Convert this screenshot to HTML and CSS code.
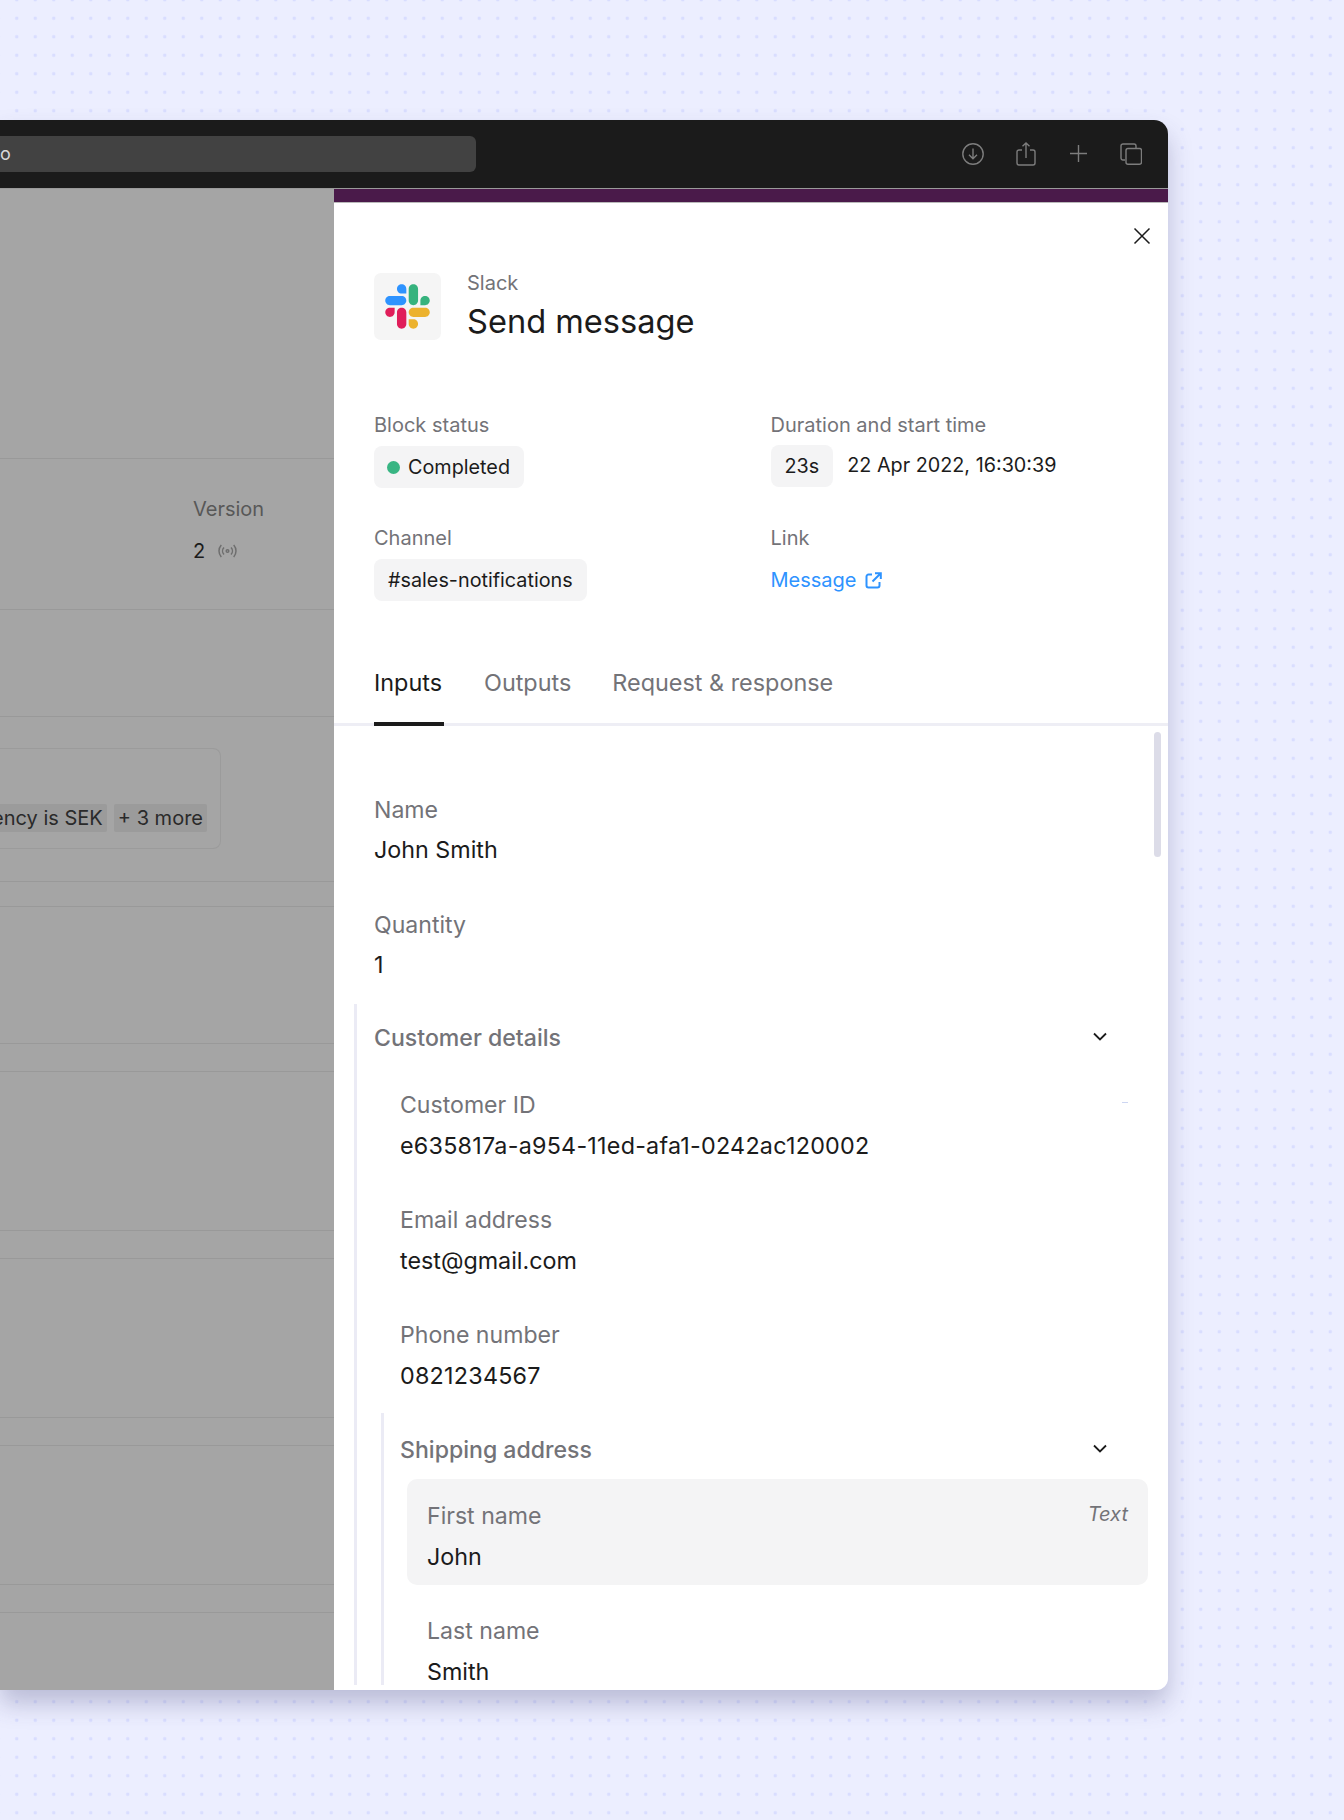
FILE: index.html
```html
<!DOCTYPE html>
<html lang="en">
  <head>
    <meta charset="UTF-8" />
    <meta name="viewport" content="width=device-width, initial-scale=1.0" />
    <title>Send message</title>
    <link rel="stylesheet" href="styles.css">
  </head>
  <body>
    <div class="window">
      <div class="titlebar">
        <div class="address"><span>o</span></div>
        <div class="toolbar">
          <svg class="tool" width="22" height="22" viewBox="0 0 22 22"><circle cx="11" cy="11" r="10.2"/><path d="M11 5.5v10M7 11.8l4 4 4-4"/></svg>
          <svg class="tool" width="20" height="24" viewBox="0 0 20 24"><path d="M6 8H3a2 2 0 0 0-2 2v11a2 2 0 0 0 2 2h14a2 2 0 0 0 2-2V10a2 2 0 0 0-2-2h-3M10 16V1M6.5 4.2L10 1l3.500 3.200"/></svg>
          <svg class="tool" width="19" height="19" viewBox="0 0 19 19"><path d="M9.500 1v17M1 9.500h17"/></svg>
          <svg class="tool" width="22" height="22" viewBox="0 0 22 22"><path d="M5 17H3a2 2 0 0 1-2-2V3a2 2 0 0 1 2-2h11a2 2 0 0 1 2 2v2"/><rect x="6" y="5.500" width="15.500" height="15.700" rx="2"/></svg>
        </div>
      </div>

      <div class="content">
        <div class="dim-col">
          <div class="dim-row"></div>
          <div class="dim-row version-row">
            <div class="dim-label">Version</div>
            <div class="version-value">
              <span>2</span>
              <svg width="21" height="14" viewBox="0 0 21 14"><circle cx="10.500" cy="7" r="1.300"/><path d="M7 3.500a5 5 0 0 0 0 7M14 3.500a5 5 0 0 1 0 7M4.300 1a9 9 0 0 0 0 12M16.700 1a9 9 0 0 1 0 12"/></svg>
            </div>
          </div>
          <div class="dim-row"></div>
          <div class="dim-row">
            <div class="filter-box">
              <span class="dim-chip">Currency is SEK</span>
              <span class="dim-chip">+ 3 more</span>
            </div>
          </div>
          <div class="dim-row"></div>
          <div class="dim-row"></div>
          <div class="dim-row"></div>
          <div class="dim-row"></div>
          <div class="dim-row"></div>
          <div class="dim-row"></div>
          <div class="dim-row"></div>
          <div class="dim-row"></div>
          <div class="dim-row"></div>
          <div class="dim-row"></div>
        </div>

        <div class="panel">
          <div class="panel-stripe"></div>
          <svg class="close-btn" width="18" height="18" viewBox="0 0 18 18"><path d="M1.500 1.500l15 15M16.500 1.500l-15 15"/></svg>

          <div class="panel-header">
            <div class="logo-tile">
              <svg width="45" height="45" viewBox="0 0 127 127">
                <path fill="#e01e5a" d="M27.200 80c0 7.300-5.900 13.200-13.200 13.200C6.700 93.200.8 87.300.8 80c0-7.300 5.900-13.200 13.200-13.200h13.200V80zm6.600 0c0-7.300 5.900-13.200 13.200-13.200 7.300 0 13.200 5.900 13.200 13.200v33c0 7.300-5.900 13.200-13.200 13.200-7.300 0-13.200-5.900-13.200-13.200V80z"/>
                <path fill="#2e93ff" d="M47 27c-7.300 0-13.200-5.900-13.200-13.200C33.800 6.500 39.700.6 47 .6c7.300 0 13.200 5.900 13.200 13.200V27H47zm0 6.700c7.300 0 13.200 5.900 13.200 13.200 0 7.300-5.900 13.200-13.200 13.200H13.900C6.600 60.100.7 54.200.7 46.900c0-7.300 5.900-13.200 13.200-13.200H47z"/>
                <path fill="#36b37e" d="M99.900 46.900c0-7.300 5.900-13.200 13.200-13.200 7.300 0 13.200 5.900 13.200 13.200 0 7.300-5.900 13.200-13.200 13.200H99.900V46.900zm-6.600 0c0 7.300-5.900 13.200-13.200 13.200-7.300 0-13.200-5.900-13.200-13.200V13.800C66.900 6.500 72.800.6 80.100.6c7.300 0 13.200 5.900 13.200 13.200v33.100z"/>
                <path fill="#ecb22e" d="M80.100 99.800c7.300 0 13.200 5.900 13.200 13.200 0 7.300-5.900 13.200-13.200 13.200-7.300 0-13.200-5.900-13.200-13.200V99.800h13.200zm0-6.600c-7.300 0-13.200-5.900-13.200-13.200 0-7.300 5.900-13.200 13.200-13.200h33.100c7.300 0 13.200 5.900 13.200 13.200 0 7.300-5.900 13.200-13.200 13.200H80.100z"/>
              </svg>
            </div>
            <div class="header-text">
              <div class="app-name">Slack</div>
              <h1>Send message</h1>
            </div>
          </div>

          <div class="meta-grid">
            <div>
              <div class="label">Block status</div>
              <div class="pill"><span class="status-dot"></span>Completed</div>
            </div>
            <div>
              <div class="label">Duration and start time</div>
              <div class="duration">
                <div class="pill">23s</div>
                <span>22 Apr 2022, 16:30:39</span>
              </div>
            </div>
            <div>
              <div class="label">Channel</div>
              <div class="pill">#sales-notifications</div>
            </div>
            <div>
              <div class="label">Link</div>
              <a class="link" href="#">
                Message
                <svg width="17" height="17" viewBox="0 0 17 17"><path d="M7 2.500H3.500a2 2 0 0 0-2 2v9a2 2 0 0 0 2 2h9a2 2 0 0 0 2-2V10M10 1.200h5.800V7M15.500 1.500L7.500 9.500"/></svg>
              </a>
            </div>
          </div>

          <div class="tabs">
            <div class="tab active">Inputs</div>
            <div class="tab">Outputs</div>
            <div class="tab">Request &amp; response</div>
          </div>

          <div class="fields">
            <div class="scrollbar"></div>

            <div class="field">
              <div class="label">Name</div>
              <div class="value">John Smith</div>
            </div>
            <div class="field">
              <div class="label">Quantity</div>
              <div class="value">1</div>
            </div>

            <div class="group">
              <div class="group-head">
                <span>Customer details</span>
                <svg class="chevron" width="16" height="10" viewBox="0 0 16 10"><path d="M2 1.500l6 6 6-6"/></svg>
              </div>
              <div class="group-body">
                <div class="field">
                  <div class="field-top">
                    <div class="label">Customer ID</div>
                    <span class="speck"></span>
                  </div>
                  <div class="value digits">e635817a-a954-11ed-afa1-0242ac120002</div>
                </div>
                <div class="field">
                  <div class="label">Email address</div>
                  <div class="value">test@gmail.com</div>
                </div>
                <div class="field">
                  <div class="label">Phone number</div>
                  <div class="value digits">0821234567</div>
                </div>

                <div class="group nested">
                  <div class="group-head">
                    <span>Shipping address</span>
                    <svg class="chevron" width="16" height="10" viewBox="0 0 16 10"><path d="M2 1.500l6 6 6-6"/></svg>
                  </div>
                  <div class="field card">
                    <div class="field-top">
                      <div class="label">First name</div>
                      <span class="type-hint">Text</span>
                    </div>
                    <div class="value">John</div>
                  </div>
                  <div class="field last-name">
                    <div class="label">Last name</div>
                    <div class="value">Smith</div>
                  </div>
                </div>
              </div>
            </div>
          </div>
        </div>
      </div>
    </div>
  </body>
</html>
```

FILE: styles.css
```css
* {
  box-sizing: border-box;
}

body {
  font-family: Inter, "Liberation Sans", sans-serif;
  margin: 0;
  height: 1820px;
  overflow: hidden;
  padding-top: 120px;
  background-color: #eceeff;
  background-image: radial-gradient(circle, #d9ddff 1.7px, transparent 2px);
  background-size: 18.5px 18.5px;
  background-position: 7.5px 9px;
}

.window {
  width: 1168px;
  height: 1570px;
  display: flex;
  flex-direction: column;
  overflow: hidden;
  border-radius: 0 14px 12px 0;
  box-shadow: 0 14px 24px rgba(60, 60, 110, 0.28);
}

.titlebar {
  height: 69px;
  flex: none;
  display: flex;
  align-items: center;
  justify-content: space-between;
  padding: 0 26px 1px 0;
  background-color: #1b1b1b;
  border-bottom: 1px solid #9a9a9a;
}

.address {
  width: 476px;
  height: 36px;
  display: flex;
  align-items: center;
  background-color: #424242;
  border-radius: 0 6px 6px 0;
  color: #d8d8d8;
  font-size: 18px;
}

.toolbar {
  display: flex;
  align-items: center;
  gap: 32px;
}

.tool {
  fill: none;
  stroke: #7d7d7d;
  stroke-width: 1.4;
}

.tool:nth-child(2) {
  margin-right: 1px;
}

.content {
  flex: 1;
  min-height: 0;
  display: flex;
}

/* dimmed page behind the drawer */
.dim-col {
  width: 334px;
  flex: none;
  display: grid;
  grid-template-rows: 270px 151px 107px 165px 25px 137px 28px 159px 28px 159px 28px 139px 28px 1fr;
  background-color: #a5a5a5;
  overflow: hidden;
}

.dim-row {
  border-bottom: 1px solid #999;
}

.dim-row:last-child {
  border-bottom: none;
}

.version-row {
  padding: 37px 0 0 193px;
}

.dim-label {
  font-size: 20px;
  line-height: 26px;
  color: #585858;
}

.version-value {
  display: flex;
  align-items: center;
  gap: 12px;
  margin-top: 16px;
  font-size: 20px;
  line-height: 26px;
  color: #1c1c1c;
}

.version-value svg {
  fill: none;
  stroke: #6e6e6e;
  stroke-width: 1.5;
}

.filter-box {
  width: 221px;
  height: 101px;
  margin-top: 31px;
  padding: 55px 13px 0 0;
  display: flex;
  justify-content: flex-end;
  gap: 7px;
  border: 1px solid #9b9b9b;
  border-left: none;
  border-radius: 0 8px 8px 0;
  white-space: nowrap;
}

.dim-chip {
  flex: none;
  height: 28px;
  padding: 0 4px;
  background-color: #9b9b9b;
  border-radius: 2px;
  font-size: 20px;
  line-height: 28px;
  color: #2a2a2a;
}

.panel {
  flex: 1;
  min-width: 0;
  position: relative;
  display: flex;
  flex-direction: column;
  background-color: #fff;
}

.panel-stripe {
  height: 14px;
  flex: none;
  background-color: #4a1a4a;
  border-bottom: 1px solid #b9b9b9;
}

.close-btn {
  position: absolute;
  top: 38px;
  right: 17px;
  fill: none;
  stroke: #1b1b1b;
  stroke-width: 1.5;
}

.panel-header {
  display: flex;
  gap: 26px;
  padding: 70px 40px 0;
}

.logo-tile {
  width: 67px;
  height: 67px;
  display: flex;
  align-items: center;
  justify-content: center;
  background-color: #f5f5f5;
  border-radius: 7px;
}

.header-text {
  margin-top: -2px;
}

.app-name {
  font-size: 20px;
  line-height: 24px;
  color: #737378;
}

h1 {
  margin: 6px 0 0;
  font-size: 32.6px;
  line-height: 40px;
  font-weight: 400;
  color: #1b1b1b;
}

.meta-grid {
  display: grid;
  grid-template-columns: 396.5px 1fr;
  row-gap: 37px;
  padding: 71px 40px 0;
}

.label {
  font-size: 20px;
  line-height: 26px;
  color: #737378;
}

.pill {
  display: inline-flex;
  align-items: center;
  gap: 8px;
  height: 42px;
  margin-top: 8px;
  padding: 0 14px;
  background-color: #f4f4f5;
  border-radius: 8px;
  font-size: 19.8px;
  color: #1b1b1b;
}

.status-dot {
  width: 13px;
  height: 13px;
  margin-left: -1px;
  border-radius: 50%;
  background-color: #38b583;
}

.duration {
  display: flex;
  align-items: center;
  gap: 14px;
  font-size: 19.8px;
  color: #1b1b1b;
}

.duration .pill {
  margin-top: 7px;
}

.duration span {
  margin-top: 5px;
}

.link {
  display: flex;
  align-items: center;
  gap: 8px;
  height: 42px;
  margin-top: 8px;
  font-size: 20px;
  color: #2e93ff;
  text-decoration: none;
}

.link svg {
  fill: none;
  stroke: #2e93ff;
  stroke-width: 2;
}

.tabs {
  display: flex;
  gap: 41px;
  margin-top: 63px;
  padding: 0 40px;
  border-bottom: 3px solid #eeeef5;
}

.tab {
  padding: 5px 0 25px;
  margin-bottom: -3px;
  border-bottom: 4px solid transparent;
  font-size: 23.4px;
  line-height: 28px;
  color: #737378;
}

.tab.active {
  min-width: 70px;
  margin-right: -1px;
  color: #1b1b1b;
  border-bottom-color: #1b1b1b;
}

.fields {
  flex: 1;
  min-height: 0;
  position: relative;
  overflow: hidden;
  padding: 71px 20px 0 40px;
}

.scrollbar {
  position: absolute;
  top: 6px;
  right: 7px;
  width: 7px;
  height: 125px;
  border-radius: 4px;
  background-color: #dcdce8;
}

.field + .field {
  margin-top: 49px;
}

.group-body .field + .field {
  margin-top: 48px;
}

.value {
  margin-top: 14px;
  font-size: 23.3px;
  line-height: 26px;
  color: #1b1b1b;
}

.group-body .value {
  margin-top: 15px;
}

/* ids and phone numbers run a bit wider in the source */
.value.digits {
  letter-spacing: 0.25px;
}

.field .label {
  font-size: 23.1px;
}

.field-top {
  display: flex;
  align-items: center;
  justify-content: space-between;
}

.speck {
  width: 6px;
  height: 1px;
  margin: -6px 20px 0 0;
  background-color: #cdd6f2;
}

.group {
  margin: 26px 0 0 -20px;
  padding: 20px 0 0 17px;
  border-left: 3px solid #ebebf5;
}

.group-head {
  display: flex;
  align-items: center;
  justify-content: space-between;
  padding-right: 40px;
  font-size: 23.1px;
  font-weight: 500;
  line-height: 28px;
  color: #737378;
}

.chevron {
  margin-top: -3px;
  fill: none;
  stroke: #1b1b1b;
  stroke-width: 1.8;
}

.group-body {
  padding-left: 26px;
  padding-top: 40px;
}

.group.nested {
  margin: 24px 0 0 -19px;
  padding: 23px 0 0 16px;
}

.group-body .field.card {
  margin: 15px 0 0 7px;
  padding: 24px 20px 15px;
  background-color: #f4f4f5;
  border-radius: 10px;
}

.type-hint {
  margin-top: -4px;
  font-size: 20px;
  font-style: italic;
  color: #737378;
}

.group-body .field.last-name {
  margin-top: 33px;
  padding-left: 27px;
}
```
